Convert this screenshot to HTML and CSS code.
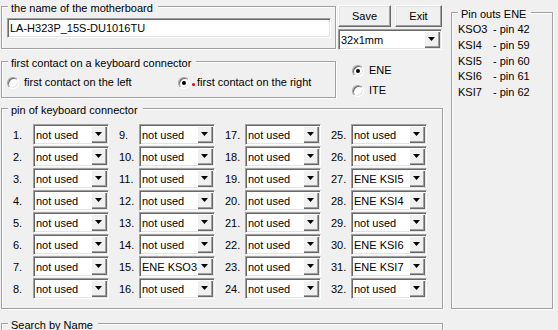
FILE: index.html
```html
<!DOCTYPE html>
<html lang="en">
<head>
    <meta charset="UTF-8">
    <meta name="viewport" content="width=device-width, initial-scale=1.0">
    <title>Keyboard connector</title>
    <link rel="stylesheet" href="styles.css">
</head>
<body>
    <div class="window">
        <div class="main">
            <div class="top-row">
                <div class="group name-group">
                    <div class="group-title">the name of the motherboard</div>
                    <div class="textbox">LA-H323P_15S-DU1016TU</div>
                </div>
                <div class="controls">
                    <div class="buttons">
                        <button class="btn save">Save</button>
                        <button class="btn exit">Exit</button>
                    </div>
                    <div class="combo wide"><span>32x1mm</span><i class="drop"></i></div>
                </div>
            </div>

            <div class="contact-row">
                <div class="group contact-group">
                    <div class="group-title">first contact on a keyboard connector</div>
                    <div class="contact-options">
                        <label class="radio first"><i class="mark"></i>first contact on the left</label>
                        <label class="radio checked"><i class="mark"></i><i class="focus-dot"></i>first contact on the right</label>
                    </div>
                </div>
                <div class="chip-type">
                    <label class="radio checked"><i class="mark"></i>ENE</label>
                    <label class="radio"><i class="mark"></i>ITE</label>
                </div>
            </div>

            <div class="group pins">
                <div class="group-title">pin of keyboard connector</div>
                <div class="pin-grid">
                    <div class="pin"><span class="num">1.</span><div class="combo"><span>not used</span><i class="drop"></i></div></div>
                    <div class="pin"><span class="num">2.</span><div class="combo"><span>not used</span><i class="drop"></i></div></div>
                    <div class="pin"><span class="num">3.</span><div class="combo"><span>not used</span><i class="drop"></i></div></div>
                    <div class="pin"><span class="num">4.</span><div class="combo"><span>not used</span><i class="drop"></i></div></div>
                    <div class="pin"><span class="num">5.</span><div class="combo"><span>not used</span><i class="drop"></i></div></div>
                    <div class="pin"><span class="num">6.</span><div class="combo"><span>not used</span><i class="drop"></i></div></div>
                    <div class="pin"><span class="num">7.</span><div class="combo"><span>not used</span><i class="drop"></i></div></div>
                    <div class="pin"><span class="num">8.</span><div class="combo"><span>not used</span><i class="drop"></i></div></div>

                    <div class="pin"><span class="num">9.</span><div class="combo"><span>not used</span><i class="drop"></i></div></div>
                    <div class="pin"><span class="num">10.</span><div class="combo"><span>not used</span><i class="drop"></i></div></div>
                    <div class="pin"><span class="num">11.</span><div class="combo"><span>not used</span><i class="drop"></i></div></div>
                    <div class="pin"><span class="num">12.</span><div class="combo"><span>not used</span><i class="drop"></i></div></div>
                    <div class="pin"><span class="num">13.</span><div class="combo"><span>not used</span><i class="drop"></i></div></div>
                    <div class="pin"><span class="num">14.</span><div class="combo"><span>not used</span><i class="drop"></i></div></div>
                    <div class="pin"><span class="num">15.</span><div class="combo"><span>ENE KSO3</span><i class="drop"></i></div></div>
                    <div class="pin"><span class="num">16.</span><div class="combo"><span>not used</span><i class="drop"></i></div></div>

                    <div class="pin"><span class="num">17.</span><div class="combo"><span>not used</span><i class="drop"></i></div></div>
                    <div class="pin"><span class="num">18.</span><div class="combo"><span>not used</span><i class="drop"></i></div></div>
                    <div class="pin"><span class="num">19.</span><div class="combo"><span>not used</span><i class="drop"></i></div></div>
                    <div class="pin"><span class="num">20.</span><div class="combo"><span>not used</span><i class="drop"></i></div></div>
                    <div class="pin"><span class="num">21.</span><div class="combo"><span>not used</span><i class="drop"></i></div></div>
                    <div class="pin"><span class="num">22.</span><div class="combo"><span>not used</span><i class="drop"></i></div></div>
                    <div class="pin"><span class="num">23.</span><div class="combo"><span>not used</span><i class="drop"></i></div></div>
                    <div class="pin"><span class="num">24.</span><div class="combo"><span>not used</span><i class="drop"></i></div></div>

                    <div class="pin"><span class="num">25.</span><div class="combo"><span>not used</span><i class="drop"></i></div></div>
                    <div class="pin"><span class="num">26.</span><div class="combo"><span>not used</span><i class="drop"></i></div></div>
                    <div class="pin"><span class="num">27.</span><div class="combo"><span>ENE KSI5</span><i class="drop"></i></div></div>
                    <div class="pin"><span class="num">28.</span><div class="combo"><span>ENE KSI4</span><i class="drop"></i></div></div>
                    <div class="pin"><span class="num">29.</span><div class="combo"><span>not used</span><i class="drop"></i></div></div>
                    <div class="pin"><span class="num">30.</span><div class="combo"><span>ENE KSI6</span><i class="drop"></i></div></div>
                    <div class="pin"><span class="num">31.</span><div class="combo"><span>ENE KSI7</span><i class="drop"></i></div></div>
                    <div class="pin"><span class="num">32.</span><div class="combo"><span>not used</span><i class="drop"></i></div></div>
                </div>
            </div>

            <div class="group search">
                <div class="group-title">Search by Name</div>
            </div>
        </div>

        <div class="group pinouts">
            <div class="group-title">Pin outs ENE</div>
            <div class="pinout-list">
                <span>KSO3</span><span>- pin 42</span>
                <span>KSI4</span><span>- pin 59</span>
                <span>KSI5</span><span>- pin 60</span>
                <span>KSI6</span><span>- pin 61</span>
                <span>KSI7</span><span>- pin 62</span>
            </div>
        </div>
    </div>
</body>
</html>
```

FILE: styles.css
```css
body {
    margin: 0;
    background-color: #f0f0f0;
    font-family: "Liberation Sans", Arial, sans-serif;
    font-size: 11px;
    color: #000;
    overflow: hidden;
}

.window {
    display: flex;
    align-items: flex-start;
    height: 330px;
    overflow: hidden;
}

.main {
    width: 442px;
    padding-left: 1px;
}

/* etched group box */
.group {
    box-sizing: border-box;
    border: 1px solid #a0a0a0;
    box-shadow: inset 1px 1px 0 #fff, 1px 1px 0 #fff;
}

.group-title {
    display: table;
    margin: -5px 0 0 6px;
    padding: 0 5px 0 3px;
    line-height: 13px;
    background-color: #f0f0f0;
    white-space: nowrap;
}

.top-row {
    display: flex;
    align-items: flex-start;
}

.name-group {
    width: 335px;
    height: 43px;
    margin-top: 6px;
}

.textbox {
    box-sizing: border-box;
    width: 324px;
    height: 20px;
    margin: 3px 0 0 5px;
    padding: 1px 0 0 2px;
    line-height: 17px;
    background-color: #fff;
    border: 1px solid;
    border-color: #a0a0a0 #fff #fff #a0a0a0;
    box-shadow: inset 1px 1px 0 #696969, inset -1px -1px 0 #e3e3e3;
}

.controls {
    width: 104px;
    margin: 5px 0 0 2px;
}

.buttons {
    display: flex;
    gap: 4px;
}

.btn {
    box-sizing: border-box;
    height: 22px;
    padding: 0;
    font: inherit;
    color: #000;
    background-color: #f0f0f0;
    border: 1px solid;
    border-color: #fff #696969 #696969 #fff;
    box-shadow: inset -1px -1px 0 #a0a0a0, inset 1px 1px 0 #e3e3e3;
}

.save {
    width: 53px;
}

.exit {
    width: 47px;
}

/* sunken combo box */
.combo {
    box-sizing: border-box;
    display: flex;
    align-items: center;
    width: 76px;
    height: 21px;
    padding: 1px;
    background-color: #fff;
    border: 1px solid;
    border-color: #a0a0a0 #fff #fff #a0a0a0;
    box-shadow: inset 1px 1px 0 #696969, inset -1px -1px 0 #e3e3e3;
}

.combo span {
    flex: 1;
    padding-left: 1px;
    white-space: nowrap;
    overflow: hidden;
}

.combo.wide {
    width: 104px;
    margin-top: 2px;
}

.drop {
    display: flex;
    align-items: center;
    justify-content: center;
    flex: none;
    width: 16px;
    height: 17px;
    background-color: #f0f0f0;
    box-shadow: inset 1px 1px 0 #fff, inset -1px -1px 0 #696969, inset -2px -2px 0 #a0a0a0;
}

.drop::after {
    content: "";
    width: 7px;
    height: 4px;
    margin: 0 1px 1px 0;
    background-color: #000;
    clip-path: polygon(0 0, 100% 0, 50% 100%);
}

.contact-row {
    display: flex;
    align-items: flex-start;
    margin-top: 11px;
}

.contact-group {
    width: 335px;
    height: 37px;
}

.contact-options {
    display: flex;
    margin: 6px 0 0 5px;
}

.radio {
    display: flex;
    align-items: center;
    line-height: 13px;
    white-space: nowrap;
}

.radio.first {
    width: 171px;
}

.mark {
    box-sizing: border-box;
    display: flex;
    align-items: center;
    justify-content: center;
    width: 12px;
    height: 12px;
    margin-right: 5px;
    border-radius: 50%;
    background-color: #fff;
    border: 1px solid;
    border-color: #a0a0a0 #fff #fff #a0a0a0;
    box-shadow: inset 1px 1px 0 #696969, inset -1px -1px 0 #e3e3e3;
}

.radio.checked .mark::after {
    content: "";
    width: 4px;
    height: 4px;
    border-radius: 50%;
    background-color: #000;
}

.contact-options .radio.checked .mark {
    margin-right: 2px;
}

.focus-dot {
    width: 3px;
    height: 3px;
    margin: 3px 2px 0 0;
    border-radius: 50%;
    background-color: #e00000;
}

.chip-type {
    display: flex;
    flex-direction: column;
    gap: 7px;
    margin: 3px 0 0 16px;
}

.chip-type .mark {
    margin-right: 5px;
}

.pins {
    width: 442px;
    height: 201px;
    margin-top: 10px;
}

.pin-grid {
    display: grid;
    grid-template-columns: repeat(4, 106px);
    grid-template-rows: repeat(8, 21px);
    grid-auto-flow: column;
    row-gap: 1px;
    margin: 7px 0 0 11px;
}

.pin {
    display: flex;
    align-items: center;
}

.num {
    width: 20px;
}

.search {
    width: 442px;
    height: 7px;
    margin-top: 14px;
    border-bottom: none;
}

.pinouts {
    width: 102px;
    height: 297px;
    margin: 12px 0 0 8px;
}

.pinout-list {
    display: grid;
    grid-template-columns: 35px auto;
    margin: 1px 0 0 6px;
    line-height: 15.75px;
    white-space: nowrap;
}
```
